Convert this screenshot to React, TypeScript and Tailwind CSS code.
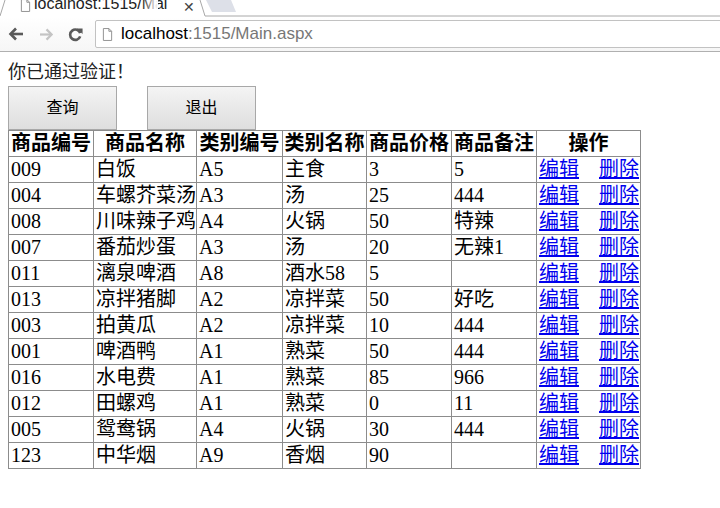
import React from "react";

type Row = [string, string, string, string, string, string];

const rows: Row[] = [
  ["009", "白饭", "A5", "主食", "3", "5"],
  ["004", "车螺芥菜汤", "A3", "汤", "25", "444"],
  ["008", "川味辣子鸡", "A4", "火锅", "50", "特辣"],
  ["007", "番茄炒蛋", "A3", "汤", "20", "无辣1"],
  ["011", "漓泉啤酒", "A8", "酒水58", "5", ""],
  ["013", "凉拌猪脚", "A2", "凉拌菜", "50", "好吃"],
  ["003", "拍黄瓜", "A2", "凉拌菜", "10", "444"],
  ["001", "啤酒鸭", "A1", "熟菜", "50", "444"],
  ["016", "水电费", "A1", "熟菜", "85", "966"],
  ["012", "田螺鸡", "A1", "熟菜", "0", "11"],
  ["005", "鸳鸯锅", "A4", "火锅", "30", "444"],
  ["123", "中华烟", "A9", "香烟", "90", ""],
];

const headers = ["商品编号", "商品名称", "类别编号", "类别名称", "商品价格", "商品备注", "操作"];

const serif = "font-['Liberation_Serif','Noto_Sans_CJK_SC',serif]";

function PageIcon({ className }: { className?: string }) {
  return (
    <svg viewBox="0 0 12 14" className={className} fill="none" stroke="#8a8a8a" strokeWidth="1">
      <path d="M1.5 0.5h6l3 3v10h-9z" fill="#fff" />
      <path d="M7.5 0.5v3h3" />
    </svg>
  );
}

function BrowserChrome() {
  return (
    <div className="font-['Liberation_Sans','Noto_Sans',sans-serif]">
      {/* tab strip */}
      <div className="relative h-[17px] bg-white overflow-hidden">
        <svg className="absolute left-0 top-0" width="720" height="17">
          <polygon points="206,0 231,0 236,12 212,12" fill="#dde0e8" />
          <polyline points="0,16 5,0" stroke="#a8a8a8" fill="none" strokeWidth="1" />
          <polyline points="200,0 205,16 720,16" stroke="#a8a8a8" fill="none" strokeWidth="1" />
        </svg>
        <div className="absolute left-[20px] top-0 flex items-start gap-[3px]">
          <PageIcon className="w-[11px] h-[13px] -mt-[1px]" />
          <span className="text-[16px] leading-[16px] -mt-[4px] text-[#222] whitespace-nowrap w-[134px] overflow-hidden">
            localhost:1515/Main.aspx
          </span>
        </div>
        <div className="absolute left-[142px] top-0 h-[14px] w-[16px] bg-gradient-to-r from-transparent to-white" />
        <span className="absolute left-[183px] -top-[3px] text-[14px] text-[#444]">✕</span>
      </div>
      {/* toolbar */}
      <div className="h-[35px] bg-gradient-to-b from-white to-[#f6f6f6] border-b border-[#b0b0b0] flex items-center">
        <svg viewBox="0 0 16 14" className="w-[16px] h-[14px] ml-[8px]" fill="none" stroke="#5a5a5a" strokeWidth="2.6">
          <path d="M15 7H3" />
          <path d="M8 1.5L2.5 7 8 12.5" />
        </svg>
        <svg viewBox="0 0 16 14" className="w-[15px] h-[13px] ml-[15px]" fill="none" stroke="#c4c4c4" strokeWidth="2.4">
          <path d="M1 7h12" />
          <path d="M8 1.5L13.5 7 8 12.5" />
        </svg>
        <svg viewBox="0 0 16 16" className="w-[15px] h-[15px] ml-[14px]" fill="none">
          <path d="M13 6.5A5.5 5.5 0 1 0 13 10" stroke="#5a5a5a" strokeWidth="2.8" />
          <path d="M9.5 1.5h6v6z" fill="#5a5a5a" />
        </svg>
        <div className="ml-[12px] h-[28px] flex-1 -mr-[4px] bg-white border border-[#c2c2c2] rounded-[2px] flex items-center pl-[6px]">
          <PageIcon className="w-[11px] h-[13px]" />
          <span className="ml-[8px] text-[17px] text-[#777]">
            <span className="text-black">localhost</span>:1515/Main.aspx
          </span>
        </div>
      </div>
    </div>
  );
}

function Button({ children }: { children: React.ReactNode }) {
  return (
    <button className="w-[109px] h-[44px] pb-[5px] bg-gradient-to-b from-[#f4f4f4] to-[#dedede] border border-[#a8a8a8] text-[16px] text-black font-['Noto_Sans_CJK_SC',sans-serif]">
      {children}
    </button>
  );
}

export default function App() {
  return (
    <div className="w-[720px] h-[508px] bg-white overflow-hidden">
      <BrowserChrome />
      <div className="px-[8px] pt-[6px]">
        <div className={`${serif} text-[18px] leading-[28px] text-[#222]`}>你已通过验证！</div>
        <div className="flex gap-[30px]">
          <Button>查询</Button>
          <Button>退出</Button>
        </div>
        <div
          className={`${serif} grid grid-cols-[85px_103px_86px_84px_85px_85px_104px] w-[633px] border-r border-b border-[#8c8c8c] text-[20px] text-black`}
        >
          {headers.map((h) => (
            <div
              key={h}
              className="h-[26px] border-l border-t border-[#8c8c8c] font-bold text-center leading-[25px] whitespace-nowrap overflow-hidden"
            >
              {h}
            </div>
          ))}
          {rows.map((r) => (
            <React.Fragment key={r[0]}>
              {r.map((c, i) => (
                <div
                  key={i}
                  className="h-[26px] border-l border-t border-[#8c8c8c] pl-[2px] leading-[25px] whitespace-nowrap overflow-hidden"
                >
                  {c}
                </div>
              ))}
              <div className="h-[26px] border-l border-t border-[#8c8c8c] pl-[2px] pr-[1px] leading-[25px] flex justify-between whitespace-nowrap">
                <a href="#" className="text-[#0000ee] underline">编辑</a>
                <a href="#" className="text-[#0000ee] underline">删除</a>
              </div>
            </React.Fragment>
          ))}
        </div>
      </div>
    </div>
  );
}
